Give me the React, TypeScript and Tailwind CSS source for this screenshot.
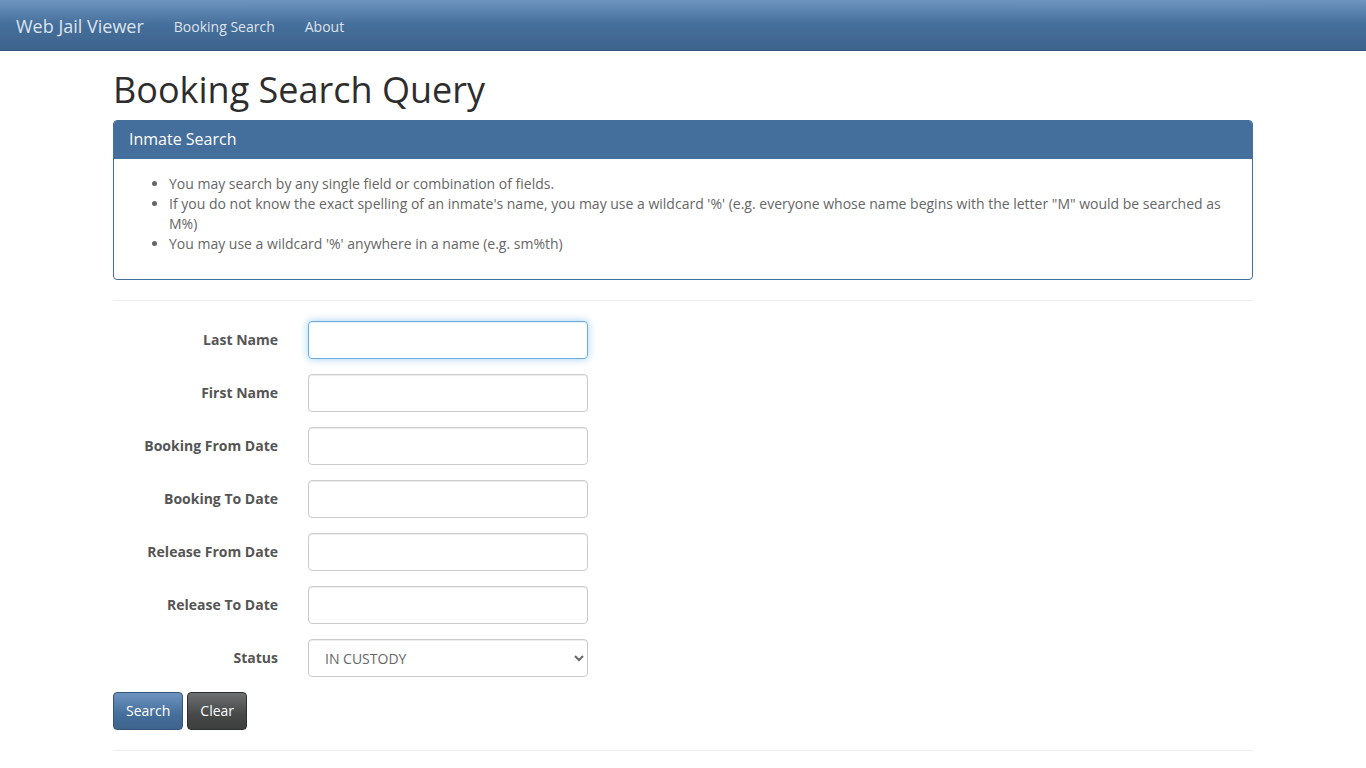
import React from "react";

const fields = [
  "Last Name",
  "First Name",
  "Booking From Date",
  "Booking To Date",
  "Release From Date",
  "Release To Date",
];

export default function App() {
  return (
    <div
      className="min-h-[768px] bg-white text-[14px] leading-[20px] text-[#666666]"
      style={{ fontFamily: '"Open Sans", "Liberation Sans", sans-serif' }}
    >
      <nav className="h-[51px] border-b border-[#345578] bg-[linear-gradient(#6d94bf,#446e9b_50%,#3e648d)] flex items-center pt-[3px]">
        <a className="pl-[16px] pr-[15px] text-[18px] leading-[20px] text-[#dde3ec] -mt-[1px]">Web Jail Viewer</a>
        <a className="px-[15px] text-[14px] text-[#dde3ec]">Booking Search</a>
        <a className="px-[15px] text-[14px] text-[#dde3ec]">About</a>
      </nav>

      <div className="mx-auto w-[1170px] px-[15px]">
        <h1 className="mt-[19px] mb-[10px] text-[36px] leading-[39.6px] font-normal text-[#2d2d2d]">
          Booking Search Query
        </h1>

        <div className="mb-[20px] rounded-[4px] border border-[#446e9b] bg-white">
          <div className="rounded-t-[3px] bg-[#446e9b] px-[15px] pt-[10px] pb-[11px] text-[16px] leading-[17.6px] text-white">
            Inmate Search
          </div>
          <div className="p-[15px]">
            <ul className="mb-[10px] list-disc pl-[40px] marker:text-[#666]">
              <li>You may search by any single field or combination of fields.</li>
              <li>
                If you do not know the exact spelling of an inmate's name, you may use a wildcard '%' (e.g. everyone whose name begins with the letter "M" would be searched as M%)
              </li>
              <li>You may use a wildcard '%' anywhere in a name (e.g. sm%th)</li>
            </ul>
          </div>
        </div>

        <hr className="mb-[20px] border-t border-[#eeeeee]" />

        <form>
          {fields.map((f, i) => (
            <div key={f} className="mb-[15px] flex items-center">
              <label className="w-[180px] pr-[15px] text-right font-bold text-[#555555]">{f}</label>
              <input
                type="text"
                className={
                  "ml-[15px] h-[38px] w-[280px] rounded-[4px] border bg-white px-[12px] text-[14px] outline-none " +
                  (i === 0
                    ? "border-[#66afe9] shadow-[inset_0_1px_1px_rgba(0,0,0,0.075),0_0_8px_rgba(102,175,233,0.6)]"
                    : "border-[#cccccc] shadow-[inset_0_1px_1px_rgba(0,0,0,0.075)]")
                }
              />
            </div>
          ))}
          <div className="mb-[15px] flex items-center">
            <label className="w-[180px] pr-[15px] text-right font-bold text-[#555555]">Status</label>
            <select
              defaultValue="IN CUSTODY"
              className="ml-[15px] h-[38px] w-[280px] rounded-[4px] border border-[#cccccc] bg-white px-[12px] text-[14px] text-[#666666] shadow-[inset_0_1px_1px_rgba(0,0,0,0.075)] outline-none"
            >
              <option>IN CUSTODY</option>
              <option>RELEASED</option>
              <option>ALL</option>
            </select>
          </div>
          <div className="flex gap-[4px]">
            <button
              type="button"
              className="h-[38px] rounded-[4px] border border-[#345578] bg-[linear-gradient(#6d94bf,#446e9b_60%,#3e648d)] px-[12px] text-[14px] text-white"
            >
              Search
            </button>
            <button
              type="button"
              className="h-[38px] rounded-[4px] border border-[#2e2f2f] bg-[linear-gradient(#6d7070,#474949_60%,#3d3f3f)] px-[12px] text-[14px] text-white"
            >
              Clear
            </button>
          </div>
        </form>

        <hr className="mt-[20px] border-t border-[#eeeeee]" />
      </div>
    </div>
  );
}
